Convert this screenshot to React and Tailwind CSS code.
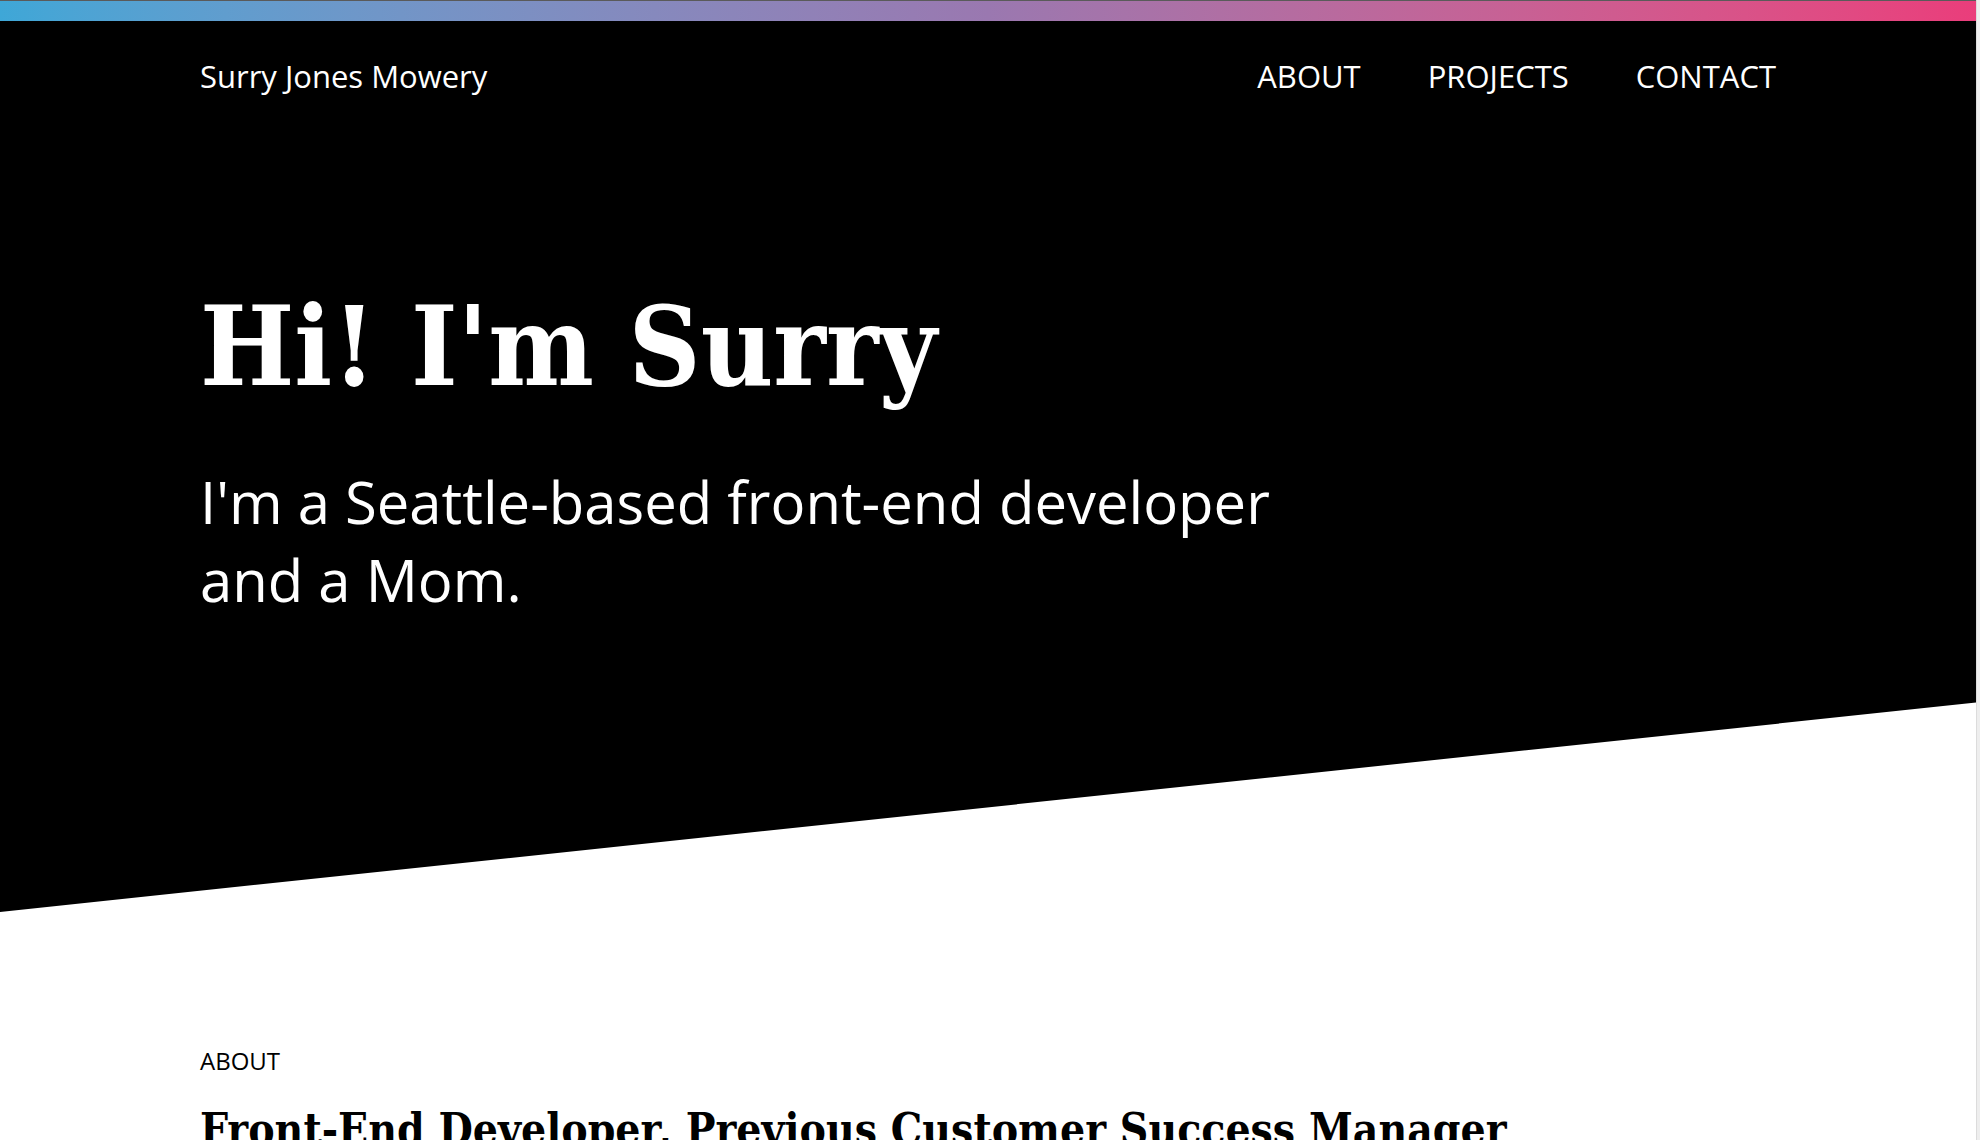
import React from "react";

const sans = { fontFamily: '"Open Sans", "Noto Sans", sans-serif' };
const serif = {
  fontFamily: '"DejaVu Serif Condensed", "DejaVu Serif", "Liberation Serif", serif',
  fontStretch: "condensed",
};

const NavBar = () => (
  <nav className="h-[110px] px-[200px] flex items-center justify-between text-white">
    <a className="text-[31px]" style={sans}>
      Surry Jones Mowery
    </a>
    <ul className="flex gap-[67px] text-[31px] uppercase" style={sans}>
      <li>About</li>
      <li>Projects</li>
      <li>Contact</li>
    </ul>
  </nav>
);

const Hero = () => (
  <section className="bg-black h-[891px] [clip-path:polygon(0_0,100%_0,100%_76.5%,0_100%)]">
    <NavBar />
    <div className="px-[200px] text-white">
      <h1 className="mt-[160px] text-[111px] leading-none font-bold" style={serif}>
        Hi! I'm Surry
      </h1>
      <p className="mt-[61px] max-w-[1150px] text-[58px] leading-[78px]" style={sans}>
        I'm a Seattle-based front-end developer and a Mom.
      </p>
    </div>
  </section>
);

const About = () => (
  <section className="px-[200px] pt-[132px] bg-white text-black">
    <h2 className="text-[24px] uppercase leading-[33px]" style={sans}>
      About
    </h2>
    <h3 className="mt-[25px] text-[44px] font-bold leading-tight" style={serif}>
      Front-End Developer, Previous Customer Success Manager
    </h3>
  </section>
);

export default function App() {
  return (
    <div className="flex w-full h-[1140px] overflow-hidden bg-white">
      <div className="flex-1 min-w-0">
        <div className="h-[1px] bg-[#5a5a5a]" />
        <div className="h-[20px] bg-gradient-to-r from-[#3ea7d7] via-[#9a78b0] to-[#ea3d7b]" />
        <Hero />
        <About />
      </div>
      <div className="w-[4px] bg-[#eeeeee] border-l border-[#dcdcdc]" />
    </div>
  );
}
